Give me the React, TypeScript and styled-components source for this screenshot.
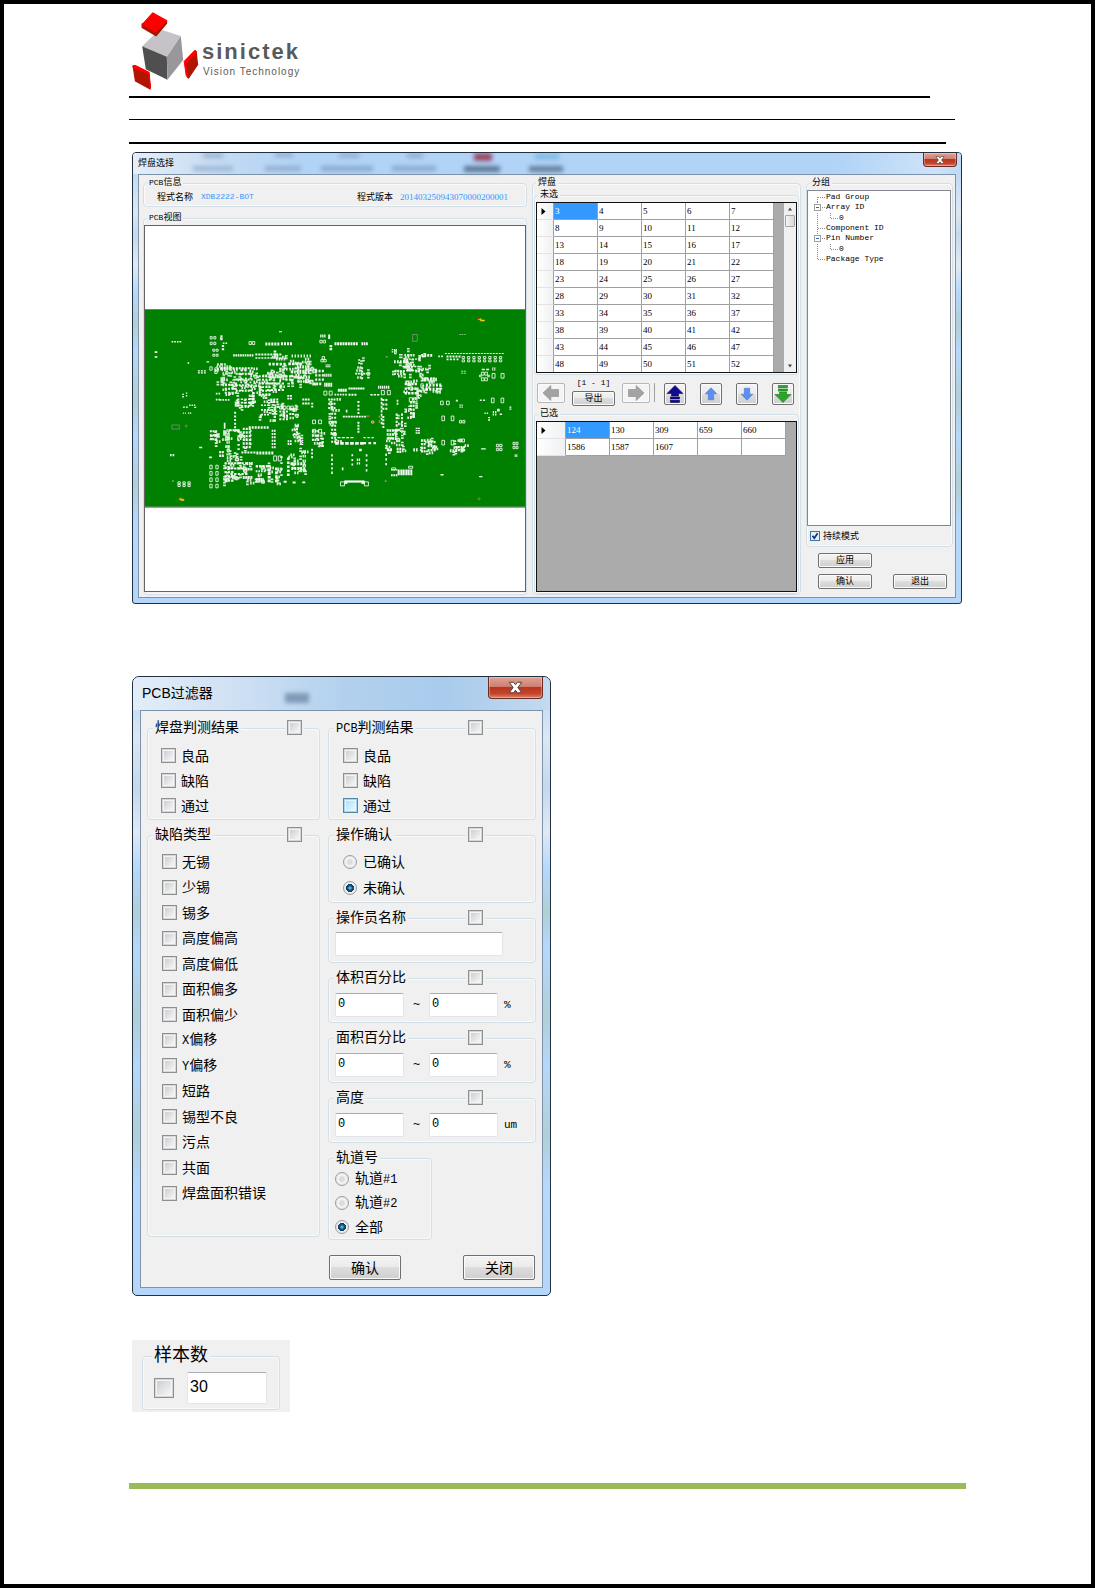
import React from "react";
import styled, { createGlobalStyle, css } from "styled-components";

const cjk = `"Liberation Sans", "Noto Sans CJK SC", sans-serif`;
const mono = `"Liberation Mono", "Noto Sans CJK SC", monospace`;

const GlobalStyle = createGlobalStyle`
  *, *::before, *::after { box-sizing: border-box; }
  body { margin: 0; background: #fff; color: #000; font-family: ${cjk}; }
  button, input { font: inherit; color: inherit; }
`;

/* ---------- page ---------- */

const Page = styled.main`
  border: 4px solid #000;
  padding: 8px 125px 95px;
  background: #fff;
`;

const Brand = styled.header`
  display: flex;
  align-items: flex-start;
  gap: 3px;
  height: 78px;
  padding-left: 3px;
`;

const BrandText = styled.div`
  display: flex;
  flex-direction: column;
  padding-top: 28px;
  color: #5a5a5a;
`;

const BrandName = styled.span`
  font-size: 22px;
  line-height: 24px;
  font-weight: 700;
  letter-spacing: 2px;
`;

const BrandTag = styled.span`
  padding-left: 1px;
  font-size: 10px;
  line-height: 16px;
  letter-spacing: 1px;
`;

const Rule = styled.div<{ $thick?: boolean; $gap: number; $end: number }>`
  height: ${(p) => (p.$thick ? 2 : 1)}px;
  margin: ${(p) => p.$gap}px ${(p) => p.$end}px 0 0;
  background: #000;
`;

const FooterBar = styled.footer`
  height: 6px;
  margin-top: 71px;
  background: #9bbb59;
`;

/* ---------- window chrome ---------- */

const Window = styled.section<{ $small?: boolean }>`
  position: relative;
  border: 1px solid #22303f;
  overflow: hidden;
  background: linear-gradient(
    to bottom, #b3d4f7 0, #dbe8f4 60px, #c3d9ee 18%, #dfeaf5 25%, #b5d8fd 31%,
    #b0cfd6 38%, #b5d8fd 44%, #b0cfd6 55%, #b5d8fd 63%, #b0cfd6 74%, #b5d8fd 82%, #b3d6fa 100%
  );
  ${(p) =>
    p.$small
      ? css`
          width: 419px;
          margin: 72px 0 0 3px;
          padding: 0 7px 7px;
          border-radius: 7px 7px 5px 5px;
          font-size: 14px;
        `
      : css`
          margin: 8px 4px 0 3px;
          padding: 0 5px 5px;
          border-radius: 4px 4px 3px 3px;
          font-size: 9px;
        `}
`;

const TitleBar = styled.div<{ $small?: boolean }>`
  position: relative;
  display: flex;
  justify-content: space-between;
  align-items: flex-start;
  height: ${(p) => (p.$small ? 33 : 21)}px;
  margin: 0 ${(p) => (p.$small ? -7 : -5)}px;
  padding: 0 ${(p) => (p.$small ? 7 : 4)}px 0 ${(p) => (p.$small ? 9 : 5)}px;
  background: ${(p) =>
    p.$small
      ? "linear-gradient(to right, #e2edf8, #cfe0f3 25%, #b3d1ee 50%, #a9cbec 75%, #c3daf0)"
      : "linear-gradient(to right, #e6eff9, #c5dbf2 10%, #b1d3f7 20%, #b1d3f7 85%, #cfe3f8 97%, #bcd9f7)"};
`;

const Ghost = styled.span<{ $x: number; $w: number; $y: number; $h: number; $c: string }>`
  position: absolute;
  left: ${(p) => p.$x}px;
  top: ${(p) => p.$y}px;
  width: ${(p) => p.$w}px;
  height: ${(p) => p.$h}px;
  background: ${(p) => p.$c};
  filter: blur(2px);
`;

const Title = styled.h2<{ $small?: boolean }>`
  position: relative;
  margin: 0;
  font-size: inherit;
  font-weight: 400;
  line-height: ${(p) => (p.$small ? 33 : 20)}px;
`;

const CloseButton = styled.button<{ $small?: boolean }>`
  position: relative;
  display: flex;
  align-items: center;
  justify-content: center;
  width: ${(p) => (p.$small ? 55 : 34)}px;
  height: ${(p) => (p.$small ? 22 : 14)}px;
  padding: 0;
  border: 1px solid #6b2c27;
  border-top: 0;
  border-radius: 0 0 4px 4px;
  box-shadow: inset 0 0 0 1px rgba(255, 255, 255, 0.3);
  background: linear-gradient(#dfa294, #d08071 45%, #ba3420 50%, #c4452c 80%, #d98a6b);
`;

const Client = styled.div<{ $small?: boolean }>`
  display: flex;
  border: 1px solid #7f93a8;
  background: #f0f0f0;
  gap: ${(p) => (p.$small ? 8 : 5)}px;
  padding: ${(p) => (p.$small ? "17px 6px 7px" : "8px 2px 2px 4px")};
`;

const Column = styled.div<{ $w?: number; $gap?: number }>`
  display: flex;
  flex-direction: column;
  gap: ${(p) => p.$gap ?? 0}px;
  min-width: 0;
  ${(p) => (p.$w ? `flex: 0 0 ${p.$w}px;` : "flex: 1;")}
`;

/* ---------- group box ---------- */

const Group = styled.fieldset<{ $pad?: string; $h?: number; $w?: number; $grow?: boolean }>`
  position: relative;
  min-width: 0;
  margin: 0;
  padding: ${(p) => p.$pad ?? "0"};
  border: 1px solid #d3dfe7;
  border-radius: 4px;
  box-shadow: inset 0 0 0 1px #fafafa;
  ${(p) => (p.$h ? `height: ${p.$h}px;` : "")}
  ${(p) => (p.$w ? `width: ${p.$w}px;` : "")}
  ${(p) => (p.$grow ? "flex: 1; display: flex; flex-direction: column;" : "")}
`;

const Legend = styled.legend<{ $x?: number; $lh?: number }>`
  position: absolute;
  left: ${(p) => p.$x ?? 3}px;
  top: ${(p) => -(p.$lh ?? 12) / 2 - 2}px;
  padding: 0 2px;
  background: #f0f0f0;
  line-height: ${(p) => p.$lh ?? 12}px;
  white-space: nowrap;
`;

const Latin = styled.span`
  font-family: ${mono};
  font-size: 12px;
`;

const SmallLatin = styled.span`
  font-family: ${mono};
  font-size: 8px;
`;

/* ---------- controls ---------- */

const Check = styled.input.attrs({ type: "checkbox" })<{ $hot?: boolean; $size?: number }>`
  appearance: none;
  flex: none;
  width: ${(p) => p.$size ?? 15}px;
  height: ${(p) => p.$size ?? 15}px;
  margin: 0;
  padding: 2px;
  border: 1px solid ${(p) => (p.$hot ? "#5586a3" : "#8e8f8f")};
  background:
    linear-gradient(135deg, ${(p) => (p.$hot ? "#b1dffd, #e9f7fe" : "#cbcfd5, #f6f6f6")}) content-box,
    ${(p) => (p.$hot ? "#def9fa" : "#f4f4f4")};
  box-shadow: inset 0 0 0 1px ${(p) => (p.$hot ? "#a5d5ee" : "#d6d6d6")};
`;

const SmallCheck = styled.input.attrs({ type: "checkbox" })`
  appearance: none;
  width: 10px;
  height: 10px;
  margin: 0;
  border: 1px solid #41749a;
  background: #e2f0f9;
`;

const CheckWrap = styled.span`
  position: relative;
  display: flex;
  svg { position: absolute; inset: 0; pointer-events: none; }
`;

const FrameCheck = styled.span<{ $right: number }>`
  position: absolute;
  top: -9px;
  right: ${(p) => p.$right}px;
  display: flex;
  padding: 0 2px;
  background: #f0f0f0;
`;

const Radio = styled.input.attrs({ type: "radio" })`
  appearance: none;
  flex: none;
  width: 14px;
  height: 14px;
  margin: 0;
  border: 1px solid #9a9c9e;
  border-radius: 50%;
  background: radial-gradient(circle, #d9dce0 0 2px, #f4f4f4 4px);
  box-shadow: inset 0 0 0 1px #e6e6e6;
  &:checked {
    background: radial-gradient(circle at 50% 50%, #4fb5dd 0 1px, #17578a 2px, #123a5c 4px, #f4f4f4 4px);
  }
`;

const Options = styled.div<{ $row: number }>`
  display: grid;
  grid-auto-rows: 1fr;
  height: ${(p) => p.$row}px;
`;

const Option = styled.label<{ $gap?: number }>`
  display: flex;
  align-items: center;
  gap: ${(p) => p.$gap ?? 5}px;
  line-height: 18px;
  white-space: nowrap;
`;

const TextBox = styled.input.attrs({ type: "text" })<{ $w: number; $h?: number }>`
  width: ${(p) => p.$w}px;
  height: ${(p) => p.$h ?? 24}px;
  padding: 0 2px 2px;
  border: 1px solid #e2e6ec;
  border-top-color: #abadb3;
  border-radius: 2px;
  background: #fff;
  font-family: ${(p) => (p.$h ? cjk : mono)};
  font-size: ${(p) => (p.$h ? 16 : 12)}px;
`;

const Range = styled.div`
  display: flex;
  align-items: center;
  font-family: ${mono};
  font-size: 12px;
`;

const Tilde = styled.span`
  width: 25px;
  text-align: center;
`;

const Unit = styled.span`
  padding-left: 6px;
  font-size: 11px;
`;

const PushButton = styled.button<{ $w: number; $h?: number }>`
  width: ${(p) => p.$w}px;
  height: ${(p) => p.$h ?? 15}px;
  padding: 0;
  border: 1px solid #707070;
  border-radius: 2px;
  box-shadow: inset 0 0 0 1px #fbfbfb;
  background: linear-gradient(#f3f3f3, #ebebeb 49%, #dddddd 50%, #cfcfcf);
  line-height: 1;
  text-align: center;
`;

const IconButton = styled(PushButton)<{ $off?: boolean }>`
  display: flex;
  align-items: center;
  justify-content: center;
  ${(p) => (p.$off ? "border-color: #b4b8bb; background: #f4f4f4;" : "")}
`;

const Actions = styled.div`
  display: flex;
  justify-content: space-between;
  padding: 0 1px;
`;

/* ---------- pad selection window ---------- */

const InfoRow = styled.div`
  display: grid;
  grid-template-columns: 44px 1fr 43px 120px;
  align-items: center;
  height: 22px;
  padding: 4px 6px 0 13px;
  line-height: 12px;
  white-space: nowrap;
`;

const Value = styled.span<{ $digits?: boolean }>`
  color: #3399ff;
  font-family: ${(p) => (p.$digits ? `"Liberation Serif", serif` : mono)};
  font-size: ${(p) => (p.$digits ? 9 : 8)}px;
`;

const View = styled.div`
  display: flex;
  flex: 1;
  align-items: center;
  border: 1px solid #646464;
  background: #fff;
  svg { display: block; width: 100%; }
`;

const GridFrame = styled.div`
  display: flex;
  height: 171px;
  border: 1px solid #111;
  background: #ababab;
  align-items: flex-start;
  overflow: hidden;
`;

const Table = styled.table<{ $head: number }>`
  width: ${(p) => p.$head + 220}px;
  table-layout: fixed;
  border-collapse: separate;
  border-spacing: 0;
  font-family: "Liberation Serif", serif;
  font-size: 9px;
  line-height: 12px;
  th { width: ${(p) => p.$head}px; }
`;

const RowHead = styled.th`
  height: 17px;
  padding: 0 0 0 4px;
  border-right: 1px solid #a0a0a0;
  border-bottom: 1px solid #e3e3e3;
  background: linear-gradient(to right, #fff, #f0f1f3);
  text-align: left;
  svg { display: block; }
`;

const Cell = styled.td<{ $on?: boolean }>`
  height: 17px;
  padding: 0 0 0 1px;
  border-right: 1px solid #a0a0a0;
  border-bottom: 1px solid #a0a0a0;
  background: ${(p) => (p.$on ? "#3399ff" : "#fff")};
  color: ${(p) => (p.$on ? "#fff" : "#000")};
`;

const Scroll = styled.div`
  display: flex;
  flex-direction: column;
  align-items: center;
  align-self: stretch;
  width: 12px;
  margin-left: auto;
  padding: 4px 0;
  background: #f0f0f0;
`;

const Thumb = styled.div`
  width: 10px;
  height: 12px;
  margin: 4px 0 auto;
  border: 1px solid #a5a5a5;
  border-radius: 1px;
  background: linear-gradient(to right, #f5f5f5, #d8d8d8);
`;

const Toolbar = styled.div`
  display: flex;
  align-items: flex-start;
  height: 39px;
  padding: 8px 4px 0 3px;
`;

const Export = styled.div`
  display: flex;
  flex-direction: column;
  align-items: center;
  gap: 2px;
  margin: -6px 7px 0;
  font-size: 9px;
  line-height: 12px;
`;

const Divider = styled.span`
  width: 1px;
  height: 19px;
  margin-left: 4px;
  background: #a0a0a0;
`;

const Arrows = styled.div`
  display: flex;
  flex: 1;
  justify-content: space-between;
  padding: 0 1px 0 9px;
`;

const Tree = styled.ul`
  display: grid;
  grid-auto-rows: 1fr;
  height: 72px;
  margin: 0;
  padding: 0;
  list-style: none;
`;

const TreeItem = styled.li`
  display: flex;
  align-items: center;
  font-family: ${mono};
  font-size: 8px;
  line-height: 10px;
  white-space: nowrap;
`;

const TreeBox = styled.div`
  height: 336px;
  padding: 1px 0 0 3px;
  border: 1px solid #828790;
  background: #fff;
`;

const Continuous = styled.label`
  display: flex;
  align-items: center;
  gap: 3px;
  height: 20px;
  padding-left: 3px;
  line-height: 12px;
`;

const ButtonGrid = styled.div`
  display: flex;
  justify-content: space-between;
  align-items: flex-end;
  padding: 6px 6px 0 12px;
`;

const Stack = styled.div`
  display: flex;
  flex-direction: column;
  gap: 6px;
`;

/* ---------- sample count ---------- */

const Sample = styled.section`
  width: 158px;
  height: 72px;
  margin: 44px 0 0 3px;
  padding: 16px 10px 2px 10px;
  background: #f0f0f0;
  font-size: 18px;
`;

const SampleRow = styled.div`
  display: flex;
  align-items: center;
  gap: 13px;
`;

/* ---------- drawings ---------- */

const Logo = () => (
  <svg width="67" height="78" viewBox="0 0 200 234" aria-hidden="true">
    <polygon points="30,103 83,52 146,72 104,134" fill="#c5c3c7" />
    <polygon points="30,103 104,134 106,203 41,172" fill="#4f4f4f" />
    <polygon points="104,134 146,72 153,144 106,203" fill="#99979b" />
    <polygon points="30,36 30,46 72,71 103,34 103,26" fill="#a81400" stroke="#a81400" strokeWidth="4" strokeLinejoin="round" />
    <polygon points="62,3 103,26 70,60 31,37" fill="#fe0000" stroke="#fe0000" strokeWidth="4" strokeLinejoin="round" />
    <polygon points="3,162 48,184 54,231 10,207" fill="#b01500" stroke="#b01500" strokeWidth="4" strokeLinejoin="round" />
    <polygon points="2,162 9,160 51,181 55,228 49,186 4,168" fill="#fe0000" stroke="#fe0000" strokeWidth="3" strokeLinejoin="round" />
    <polygon points="162,156 192,122 196,158 169,198" fill="#b01500" stroke="#b01500" strokeWidth="4" strokeLinejoin="round" />
    <polygon points="156,148 188,115 194,119 162,155 167,198 162,190" fill="#fe0000" stroke="#fe0000" strokeWidth="3" strokeLinejoin="round" />
  </svg>
);

const Cross = ({ size }: { size: number }) => (
  <svg width={size} height={size} viewBox="0 0 12 12" aria-hidden="true">
    <path d="M1 1.8H4.4L6 3.8L7.6 1.8H11L7.9 6L11 10.2H7.6L6 8.2L4.4 10.2H1L4.1 6Z" fill="#fff" stroke="#54403f" strokeWidth="0.8" />
  </svg>
);

const Arrow = ({ kind }: { kind: "left" | "right" | "top" | "up" | "down" | "bottom" }) => {
  const big = kind === "top" || kind === "bottom";
  const size = kind === "up" || kind === "down" ? 14 : 18;
  const turn = { left: -90, right: 90, top: 0, up: 0, down: 180, bottom: 180 }[kind];
  const fill = { left: "#a3a3a3", right: "#a3a3a3", top: "#110c8c", up: "#5b8ff0", down: "#5b8ff0", bottom: "#2ca42c" }[kind];
  const edge = { left: "#8b8b8b", right: "#8b8b8b", top: "#0a0660", up: "#3d6cc9", down: "#3d6cc9", bottom: "#1c7c1c" }[kind];
  return (
    <svg width={size} height={size} viewBox="0 0 18 18" aria-hidden="true">
      <g transform={`rotate(${turn} 9 9)`} fill={fill} stroke={edge} strokeWidth="0.6">
        {big ? (
          <>
            <path d="M9 0.5L17 8.5H12.5V11H5.5V8.5H1Z" />
            <rect x="4.5" y="12" width="9" height="2" />
            <rect x="4.5" y="15.3" width="9" height="2.2" />
          </>
        ) : (
          <path d="M9 1L16.5 8.8H12.5V16.5H5.5V8.8H1.5Z" />
        )}
      </g>
    </svg>
  );
};

const Pointer = () => (
  <svg width="5" height="7" viewBox="0 0 5 7" aria-hidden="true">
    <path d="M0.5 0L4.5 3.5L0.5 7Z" fill="#000" />
  </svg>
);

const Chevron = ({ down }: { down?: boolean }) => (
  <svg width="6" height="4" viewBox="0 0 6 4" aria-hidden="true">
    <path d={down ? "M1 0.5H5L3 3.5Z" : "M1 3.5H5L3 0.5Z"} fill="#404040" />
  </svg>
);

type NodeKind = "first" | "mid" | "open" | "child" | "last";

const Branch = ({ kind }: { kind: NodeKind }) => {
  const deep = kind === "child";
  return (
    <svg width={deep ? 28 : 15} height="10" viewBox={`0 0 ${deep ? 28 : 15} 10`} aria-hidden="true">
      <g stroke="#8a8a8a" strokeDasharray="1 1" fill="none">
        <path d={kind === "first" ? "M6.5 5V10" : kind === "last" ? "M6.5 0V5" : "M6.5 0V10"} />
        <path d={deep ? "M19.5 0V5.5H27" : "M7 5.5H14"} />
      </g>
      {kind === "open" && (
        <>
          <rect x="3.5" y="2.5" width="6" height="6" fill="#fff" stroke="#a0a0a0" />
          <path d="M5 5.5H8" stroke="#3c5fa8" />
        </>
      )}
    </svg>
  );
};

/* Board drawing: pads are listed as [x, y, columns, rows, dx, dy, w, h]. */
type PadGrid = [number, number, number, number, number, number, number, number];

const solidPads: PadGrid[] = [
  [123, 159, 4, 1, 8, 0, 5, 5], [72, 190, 1, 2, 0, 15, 8, 5], [405, 164, 5, 1, 9, 0, 6, 9], [452, 163, 4, 1, 9, 0, 6, 9],
  [270, 142, 1, 2, 0, 10, 6, 5], [277, 164, 2, 1, 8, 0, 5, 4], [274, 171, 1, 2, 0, 10, 7, 6], [594, 140, 1, 1, 0, 0, 6, 13],
  [598, 171, 1, 2, 0, 9, 8, 7], [613, 163, 9, 1, 8, 0, 6, 9], [694, 163, 3, 1, 7, 0, 5, 9], [308, 199, 9, 1, 7, 0, 5, 7],
  [375, 197, 9, 1, 9, 0, 6, 6], [375, 208, 9, 1, 9, 0, 6, 5], [484, 200, 7, 1, 9, 0, 4, 9], [415, 225, 5, 1, 11, 0, 7, 8],
  [474, 224, 4, 1, 11, 0, 8, 8], [228, 220, 1, 1, 0, 0, 8, 4], [202, 247, 3, 1, 9, 0, 6, 4], [202, 253, 3, 1, 9, 0, 6, 4],
  [260, 226, 2, 2, 9, 14, 5, 7], [270, 238, 5, 1, 9, 0, 6, 7], [316, 238, 6, 5, 9, 17, 6, 6], [330, 245, 3, 6, 14, 12, 5, 5],
  [500, 232, 5, 1, 8, 0, 5, 10], [500, 246, 5, 1, 8, 0, 5, 12], [502, 263, 5, 1, 8, 0, 5, 10], [502, 277, 5, 1, 8, 0, 5, 8],
  [555, 246, 3, 3, 10, 13, 6, 7], [582, 258, 4, 1, 6, 0, 4, 9], [582, 285, 5, 1, 5, 0, 4, 12], [586, 230, 1, 2, 0, 5, 15, 3],
  [684, 214, 1, 2, 0, 9, 6, 5], [693, 238, 1, 4, 0, 10, 6, 6], [675, 255, 6, 1, 8, 0, 6, 5], [623, 303, 4, 1, 7, 0, 6, 9],
  [655, 299, 7, 1, 7, 0, 6, 6], [613, 318, 5, 1, 8, 0, 5, 5], [655, 318, 3, 1, 9, 0, 6, 6], [721, 319, 3, 1, 10, 0, 7, 4],
  [744, 294, 6, 1, 6, 0, 4, 9], [594, 332, 3, 3, 8, 13, 6, 6], [603, 375, 2, 8, 9, 12, 6, 6], [682, 340, 1, 4, 0, 11, 6, 6],
  [682, 402, 1, 4, 0, 9, 6, 6], [638, 384, 9, 1, 8, 0, 6, 5], [647, 366, 1, 1, 0, 0, 5, 8], [752, 330, 1, 7, 0, 12, 5, 8],
  [757, 334, 2, 3, 9, 13, 6, 6], [757, 385, 1, 4, 0, 10, 6, 6], [615, 463, 6, 1, 15, 0, 11, 8], [700, 463, 3, 1, 15, 0, 8, 7],
  [622, 448, 4, 1, 13, 0, 9, 4], [700, 448, 3, 1, 12, 0, 7, 4], [770, 425, 4, 3, 8, 12, 6, 7], [797, 377, 2, 4, 16, 11, 6, 7],
  [800, 336, 1, 2, 0, 9, 5, 6], [824, 285, 4, 3, 10, 14, 7, 7], [840, 340, 2, 5, 8, 11, 6, 7], [792, 247, 4, 2, 9, 9, 6, 5],
  [792, 217, 5, 1, 9, 0, 5, 9], [817, 234, 6, 1, 9, 0, 6, 4], [828, 246, 6, 1, 9, 0, 6, 4], [828, 212, 5, 1, 9, 0, 6, 4],
  [874, 198, 4, 1, 9, 0, 6, 9], [876, 270, 6, 1, 8, 0, 5, 10], [888, 287, 5, 2, 10, 13, 6, 9], [925, 203, 2, 1, 9, 0, 5, 5],
  [945, 195, 20, 1, 9, 0, 6, 3], [950, 203, 5, 1, 9, 0, 6, 6], [950, 212, 4, 1, 10, 0, 6, 5], [988, 138, 3, 1, 7, 0, 5, 2],
  [994, 249, 2, 2, 8, 6, 6, 2], [1056, 243, 2, 1, 13, 0, 9, 4], [1087, 239, 2, 2, 6, 5, 4, 4], [1050, 335, 2, 1, 10, 0, 6, 5],
  [1102, 363, 1, 1, 0, 0, 8, 8], [1089, 370, 2, 2, 7, 7, 4, 6], [1110, 377, 1, 1, 0, 0, 7, 5], [1139, 356, 1, 2, 0, 6, 6, 4],
  [1064, 374, 2, 1, 7, 0, 4, 5], [1075, 388, 1, 2, 0, 7, 6, 4], [978, 336, 1, 1, 0, 0, 6, 5], [989, 350, 2, 2, 6, 6, 4, 4],
  [857, 420, 2, 3, 7, 7, 6, 4], [873, 455, 2, 4, 8, 11, 6, 7], [893, 460, 3, 3, 9, 12, 6, 7], [850, 482, 2, 1, 8, 0, 5, 10],
  [960, 485, 3, 1, 8, 0, 5, 9], [976, 475, 4, 2, 8, 9, 6, 7], [1054, 482, 1, 1, 0, 0, 14, 4], [932, 559, 1, 1, 0, 0, 9, 5],
  [1048, 565, 1, 1, 0, 0, 10, 4], [803, 546, 9, 1, 5, 0, 4, 17], [783, 545, 3, 1, 7, 0, 5, 4], [783, 560, 3, 1, 7, 0, 5, 6],
  [766, 498, 1, 3, 0, 14, 5, 7], [800, 480, 2, 2, 8, 9, 6, 7], [770, 482, 2, 1, 9, 0, 7, 9], [603, 500, 1, 5, 0, 13, 5, 7],
  [664, 500, 1, 3, 0, 14, 5, 6], [680, 513, 2, 2, 6, 11, 4, 7], [707, 500, 1, 4, 0, 15, 5, 7], [635, 540, 1, 1, 0, 0, 5, 8],
  [687, 483, 1, 1, 0, 0, 8, 8], [517, 488, 2, 5, 6, 14, 4, 8], [483, 524, 5, 2, 9, 14, 6, 9], [470, 510, 1, 5, 0, 12, 8, 7],
  [412, 532, 1, 5, 0, 11, 9, 8], [434, 540, 1, 4, 0, 12, 8, 8], [376, 532, 4, 1, 10, 0, 7, 8], [376, 548, 4, 1, 8, 0, 5, 6],
  [376, 571, 5, 1, 5, 0, 4, 13], [337, 541, 6, 1, 5, 0, 4, 8], [337, 565, 6, 1, 5, 0, 4, 9], [282, 524, 3, 5, 10, 13, 7, 7],
  [300, 524, 5, 3, 11, 16, 7, 6], [348, 523, 3, 1, 7, 0, 5, 9], [333, 492, 6, 1, 9, 0, 6, 6], [378, 492, 6, 1, 9, 0, 6, 9],
  [424, 426, 2, 6, 7, 10, 5, 6], [337, 420, 3, 6, 9, 11, 6, 7], [355, 416, 7, 1, 9, 0, 6, 7], [321, 430, 1, 5, 0, 13, 7, 5],
  [288, 425, 2, 7, 6, 12, 4, 7], [298, 425, 4, 1, 8, 0, 6, 6], [280, 405, 1, 2, 0, 9, 5, 9], [238, 428, 3, 3, 8, 12, 6, 6],
  [253, 455, 1, 3, 0, 9, 8, 5], [266, 490, 2, 2, 8, 11, 6, 7], [206, 477, 1, 1, 0, 0, 9, 5], [236, 507, 1, 1, 0, 0, 8, 5],
  [118, 499, 2, 1, 8, 0, 5, 7], [256, 315, 2, 2, 8, 18, 5, 5], [268, 334, 4, 1, 8, 0, 5, 5], [283, 288, 4, 3, 10, 12, 6, 6],
  [320, 332, 5, 3, 11, 10, 7, 5], [365, 313, 1, 4, 0, 9, 8, 7], [385, 262, 4, 6, 10, 11, 6, 6], [410, 284, 5, 2, 11, 20, 7, 6],
  [392, 350, 3, 3, 9, 14, 6, 5], [420, 332, 3, 2, 9, 8, 6, 6], [447, 368, 3, 3, 10, 12, 6, 6], [477, 362, 2, 2, 8, 14, 6, 6],
  [430, 362, 1, 4, 0, 11, 7, 7], [311, 372, 1, 5, 0, 11, 6, 6], [388, 380, 1, 1, 0, 0, 6, 12], [481, 248, 1, 3, 0, 13, 8, 7],
  [466, 262, 2, 2, 10, 10, 6, 7], [447, 275, 1, 2, 0, 18, 5, 8], [516, 332, 3, 2, 8, 12, 6, 6], [543, 345, 1, 2, 0, 9, 6, 5],
  [471, 322, 2, 2, 8, 8, 6, 5], [549, 284, 3, 1, 9, 0, 6, 8], [545, 427, 3, 3, 8, 13, 6, 7], [509, 456, 2, 3, 6, 6, 4, 4],
  [472, 458, 2, 2, 7, 8, 5, 6], [497, 413, 1, 3, 0, 9, 6, 6], [490, 436, 2, 2, 9, 10, 6, 6], [573, 450, 1, 3, 0, 11, 8, 6],
  [543, 483, 1, 3, 0, 11, 5, 7], [450, 506, 1, 4, 0, 18, 7, 5], [785, 183, 3, 2, 6, 7, 4, 4], [155, 325, 1, 2, 0, -7, 5, 4],
  [166, 314, 1, 2, 0, 8, 4, 4], [157, 356, 2, 1, 9, 0, 6, 4], [176, 350, 3, 1, 7, 0, 4, 5], [191, 357, 1, 1, 0, 0, 6, 4],
  [157, 374, 2, 1, 6, 0, 3, 4], [172, 374, 2, 1, 6, 0, 4, 4], [171, 223, 1, 1, 0, 0, 5, 5], [446, 130, 1, 1, 0, 0, 9, 3],
  [1155, 500, 2, 1, 5, 0, 3, 8], [570, 140, 3, 1, 6, 0, 4, 9], [430, 188, 1, 2, 0, 8, 8, 6], [460, 580, 1, 1, 0, 0, 9, 6],
  [487, 582, 1, 1, 0, 0, 9, 6], [516, 582, 1, 1, 0, 0, 9, 5],
];

const ringPads: PadGrid[] = [
  [239, 146, 2, 2, 11, 17, 6, 7], [247, 184, 2, 2, 10, 15, 6, 6], [270, 148, 1, 1, 0, 0, 5, 6], [356, 161, 2, 1, 10, 0, 7, 9],
  [569, 157, 2, 1, 10, 0, 7, 8], [576, 206, 1, 1, 0, 0, 7, 8], [572, 215, 2, 1, 9, 0, 7, 7], [238, 237, 1, 1, 0, 0, 7, 10],
  [253, 240, 1, 2, 0, 10, 7, 7], [581, 310, 2, 1, 16, 0, 9, 12], [754, 308, 2, 1, 18, 0, 9, 13], [997, 206, 8, 2, 16, 10, 7, 6],
  [1055, 253, 2, 1, 10, 0, 8, 9], [1049, 262, 1, 1, 0, 0, 5, 5], [1055, 270, 2, 1, 10, 0, 8, 9], [1074, 262, 1, 1, 0, 0, 5, 5],
  [1087, 257, 2, 1, 27, 0, 9, 14], [1085, 331, 2, 1, 29, 0, 8, 14], [932, 340, 2, 1, 18, 0, 8, 11], [936, 385, 2, 1, 28, 0, 8, 14],
  [936, 458, 2, 1, 28, 0, 8, 14], [989, 398, 2, 1, 10, 0, 6, 8], [989, 454, 2, 1, 8, 0, 7, 9], [1100, 470, 2, 2, 10, 12, 7, 7],
  [1150, 464, 2, 2, 9, 12, 6, 7], [547, 397, 2, 2, 18, 28, 9, 11], [238, 533, 2, 4, 18, 19, 7, 11], [142, 583, 3, 2, 15, 8, 7, 6],
  [448, 355, 4, 1, 11, 0, 8, 9], [430, 505, 2, 1, 14, 0, 9, 15], [785, 541, 1, 1, 0, 0, 12, 6], [836, 536, 1, 1, 0, 0, 12, 6],
  [838, 330, 2, 1, 14, 0, 9, 12], [873, 288, 1, 1, 0, 0, 7, 12], [725, 400, 1, 1, 0, 0, 6, 6], [360, 427, 1, 4, 0, 13, 2, 6],
  [631, 583, 1, 1, 0, 0, 12, 12], [703, 583, 1, 1, 0, 0, 12, 12],
];

/* Crowded parts of the board, as [x, y, width, height, number of parts]. */
const crowds: [number, number, number, number, number][] = [
  [252, 226, 60, 60, 14], [270, 236, 110, 90, 42], [385, 236, 70, 90, 30], [410, 195, 135, 80, 34], [450, 240, 110, 50, 22],
  [310, 320, 60, 40, 14], [385, 320, 70, 80, 18], [445, 345, 55, 50, 14], [236, 425, 110, 60, 26], [262, 485, 70, 34, 10],
  [278, 520, 84, 66, 28], [370, 525, 80, 62, 20], [465, 480, 60, 75, 14], [478, 405, 36, 60, 12], [545, 430, 34, 40, 8],
  [780, 180, 60, 90, 16], [820, 195, 85, 70, 28], [820, 275, 45, 120, 24], [872, 265, 64, 48, 16], [765, 420, 54, 70, 18],
  [870, 450, 50, 48, 12], [795, 375, 30, 60, 8], [968, 455, 44, 40, 8], [595, 325, 30, 140, 16], [675, 205, 40, 70, 8],
];

const expand = (list: PadGrid[]) =>
  list
    .map(([x, y, nx, ny, dx, dy, w, h]) => {
      let d = "";
      for (let i = 0; i < nx; i++)
        for (let j = 0; j < ny; j++) d += `M${x + i * dx} ${y + j * dy}h${w}v${h}h${-w}z`;
      return d;
    })
    .join("");

const scatter = () => {
  let seed = 20140325;
  const next = (n: number) => {
    seed = (seed * 1103515245 + 12345) % 2147483648;
    return Math.floor((seed / 2147483648) * n);
  };
  let d = "";
  crowds.forEach(([x, y, w, h, count]) => {
    for (let i = 0; i < count; i++) {
      const px = x + next(w / 3) * 3;
      const py = y + next(h / 3) * 3;
      d += next(2) ? `M${px} ${py}h5v8h-5zM${px + 8} ${py}h5v8h-5z` : `M${px} ${py}h8v5h-8zM${px} ${py + 8}h8v5h-8z`;
    }
  });
  return d;
};

const Board = () => (
  <svg viewBox="43 63 1143 597" role="img" aria-label="PCB">
    <rect x="43" y="63" width="1143" height="597" fill="#008000" />
    <path d="M43 64.5H1186M43 658H1186" stroke="#5f8f5f" strokeWidth="3" />
    <path d={scatter()} fill="#d9ecd9" />
    <path d={expand(solidPads)} fill="#f2f9f2" />
    <path d={expand(ringPads)} fill="none" stroke="#f2f9f2" strokeWidth="2.6" />
    <path d="M643 580H703V588H695V584H651V588H643Z" fill="#fff" stroke="#fff" strokeWidth="2" />
    <g fill="none" stroke="#7d8f7d" strokeWidth="2.5">
      <rect x="848" y="140" width="14" height="20" />
      <rect x="124" y="412" width="22" height="12" />
      <circle cx="167" cy="415" r="3" />
      <circle cx="1048" cy="634" r="3" />
      <path d="M767 207H773M124 581H130M764 581H770" strokeWidth="5" />
    </g>
    <path d="M1045 92H1054V96H1064V99H1052V95H1045ZM146 632H152V635H160V639H150V636H146Z" fill="#ffe600" stroke="#e8c000" strokeWidth="2" />
    <path d="M1044 90H1050V94H1044ZM146 630H150V634H146Z" fill="#e02020" />
    <path d="M710 385h8M725 403h8M748 384v6M748 398v8" stroke="#e07030" strokeWidth="4" />
  </svg>
);

/* ---------- data ---------- */

const freePads = Array.from({ length: 10 }, (_, r) => Array.from({ length: 5 }, (_, c) => String(3 + r * 5 + c)));
const chosenPads = [
  ["124", "130", "309", "659", "660"],
  ["1586", "1587", "1607", "", ""],
];

const treeNodes: [NodeKind, string][] = [
  ["first", "Pad Group"],
  ["open", "Array ID"],
  ["child", "0"],
  ["mid", "Component ID"],
  ["open", "Pin Number"],
  ["child", "0"],
  ["last", "Package Type"],
];

const defectTypes: React.ReactNode[] = [
  "无锡", "少锡", "锡多", "高度偏高", "高度偏低", "面积偏多", "面积偏少",
  <><Latin>X</Latin>偏移</>, <><Latin>Y</Latin>偏移</>,
  "短路", "锡型不良", "污点", "共面", "焊盘面积错误",
];

const PadTable = ({ rows, head, label }: { rows: string[][]; head: number; label: string }) => (
  <Table $head={head} aria-label={label}>
    <tbody>
      {rows.map((row, r) => (
        <tr key={r}>
          <RowHead scope="row">{r === 0 && <Pointer />}</RowHead>
          {row.map((v, c) => (
            <Cell key={c} $on={r === 0 && c === 0}>{v}</Cell>
          ))}
        </tr>
      ))}
    </tbody>
  </Table>
);

const blurs: [number, number, number, number, string][] = [
  [70, 0, 20, 5, "#9db7d3"], [60, 13, 40, 5, "#9fb9d6"],
  [142, 0, 18, 4, "#8fadcf"], [132, 13, 36, 5, "#93afd0"],
  [206, 0, 20, 5, "#94b3d2"], [188, 13, 52, 5, "#8aa9cc"],
  [274, 0, 16, 5, "#8fafd2"], [259, 13, 44, 5, "#8aa9cc"],
  [341, 0, 18, 8, "#9a4a68"], [331, 13, 36, 6, "#5e7895"],
  [402, 0, 24, 7, "#86bde4"], [396, 13, 34, 6, "#66809e"],
];

const PadWindow = () => (
  <Window>
    <TitleBar>
      {blurs.map(([x, y, w, h, c], i) => (
        <Ghost key={i} $x={x} $y={y} $w={w} $h={h} $c={c} />
      ))}
      <Title>焊盘选择</Title>
      <CloseButton aria-label="关闭"><Cross size={10} /></CloseButton>
    </TitleBar>
    <Client>
      <Column $gap={11}>
        <Group $h={24}>
          <Legend><SmallLatin>PCB</SmallLatin>信息</Legend>
          <InfoRow>
            <span>程式名称</span>
            <Value>XDB2222-BOT</Value>
            <span>程式版本</span>
            <Value $digits>201403250943070000200001</Value>
          </InfoRow>
        </Group>
        <Group $grow $pad="6px 0 2px">
          <Legend><SmallLatin>PCB</SmallLatin>视图</Legend>
          <View><Board /></View>
        </Group>
      </Column>
      <Column $w={269}>
        <Group $pad="11px 1px 0">
          <Legend>焊盘</Legend>
          <Group $pad="6px 1px 1px">
            <Legend>未选</Legend>
            <GridFrame>
              <PadTable rows={freePads} head={17} label="未选" />
              <Scroll>
                <Chevron />
                <Thumb />
                <Chevron down />
              </Scroll>
            </GridFrame>
          </Group>
          <Toolbar>
            <IconButton $w={28} $h={20} $off aria-label="上一页"><Arrow kind="left" /></IconButton>
            <Export>
              <SmallLatin>[1 - 1]</SmallLatin>
              <PushButton $w={43}>导出</PushButton>
            </Export>
            <IconButton $w={28} $h={20} $off aria-label="下一页"><Arrow kind="right" /></IconButton>
            <Divider />
            <Arrows>
              <IconButton $w={22} $h={22} aria-label="全部上移"><Arrow kind="top" /></IconButton>
              <IconButton $w={22} $h={22} aria-label="上移"><Arrow kind="up" /></IconButton>
              <IconButton $w={22} $h={22} aria-label="下移"><Arrow kind="down" /></IconButton>
              <IconButton $w={22} $h={22} aria-label="全部下移"><Arrow kind="bottom" /></IconButton>
            </Arrows>
          </Toolbar>
          <Group $pad="6px 1px 1px">
            <Legend>已选</Legend>
            <GridFrame>
              <PadTable rows={chosenPads} head={29} label="已选" />
            </GridFrame>
          </Group>
        </Group>
      </Column>
      <Column $w={147}>
        <Group $pad="6px 1px 0 0">
          <Legend>分组</Legend>
          <TreeBox>
            <Tree>
              {treeNodes.map(([kind, text], i) => (
                <TreeItem key={i}>
                  <Branch kind={kind} />
                  {text}
                </TreeItem>
              ))}
            </Tree>
          </TreeBox>
          <Continuous>
            <CheckWrap>
              <SmallCheck defaultChecked />
              <svg width="10" height="10" viewBox="0 0 10 10" aria-hidden="true">
                <path d="M2.5 4.8L4.3 7.3L7.6 2.3" fill="none" stroke="#14307c" strokeWidth="1.7" />
              </svg>
            </CheckWrap>
            持续模式
          </Continuous>
        </Group>
        <ButtonGrid>
          <Stack>
            <PushButton $w={54}>应用</PushButton>
            <PushButton $w={54}>确认</PushButton>
          </Stack>
          <PushButton $w={54}>退出</PushButton>
        </ButtonGrid>
      </Column>
    </Client>
  </Window>
);

const FilterGroup = ({ title, h, pad, right = 50, children }: {
  title: React.ReactNode; h: number; pad: string; right?: number; children: React.ReactNode;
}) => (
  <Group $h={h} $pad={pad}>
    <Legend $x={5} $lh={18}>{title}</Legend>
    <FrameCheck $right={right}><Check aria-label="启用" /></FrameCheck>
    {children}
  </Group>
);

const RangeFields = ({ name, unit }: { name: string; unit: string }) => (
  <Range>
    <TextBox $w={69} defaultValue="0" aria-label={`${name} 下限`} />
    <Tilde>~</Tilde>
    <TextBox $w={69} defaultValue="0" aria-label={`${name} 上限`} />
    <Unit>{unit}</Unit>
  </Range>
);

const results = ["良品", "缺陷", "通过"];

const FilterWindow = () => (
  <Window $small>
    <TitleBar $small>
      <Ghost $x={152} $y={16} $w={24} $h={10} $c="#7f9ab8" />
      <Title $small>PCB过滤器</Title>
      <CloseButton $small aria-label="关闭"><Cross size={15} /></CloseButton>
    </TitleBar>
    <Client $small>
      <Column $w={173} $gap={15}>
        <FilterGroup title="焊盘判测结果" h={92} pad="14px 0 0 13px" right={15}>
          <Options $row={75}>
            {results.map((t) => (
              <Option key={t}><Check />{t}</Option>
            ))}
          </Options>
        </FilterGroup>
        <FilterGroup title="缺陷类型" h={402} pad="13px 0 0 14px" right={15}>
          <Options $row={357}>
            {defectTypes.map((t, i) => (
              <Option key={i}><Check /><span>{t}</span></Option>
            ))}
          </Options>
        </FilterGroup>
      </Column>
      <Column $gap={15}>
        <FilterGroup title={<><Latin>PCB</Latin>判测结果</>} h={92} pad="14px 0 0 14px">
          <Options $row={75}>
            {results.map((t) => (
              <Option key={t}><Check $hot={t === "通过"} />{t}</Option>
            ))}
          </Options>
        </FilterGroup>
        <FilterGroup title="操作确认" h={68} pad="13px 0 0 14px">
          <Options $row={52}>
            <Option $gap={6}><Radio name="confirm" />已确认</Option>
            <Option $gap={6}><Radio name="confirm" defaultChecked />未确认</Option>
          </Options>
        </FilterGroup>
        <FilterGroup title="操作员名称" h={45} pad="13px 0 0 6px">
          <Range><TextBox $w={168} aria-label="操作员名称" /></Range>
        </FilterGroup>
        <FilterGroup title="体积百分比" h={45} pad="14px 0 0 6px">
          <RangeFields name="体积百分比" unit="%" />
        </FilterGroup>
        <FilterGroup title="面积百分比" h={45} pad="14px 0 0 6px">
          <RangeFields name="面积百分比" unit="%" />
        </FilterGroup>
        <FilterGroup title="高度" h={45} pad="14px 0 0 6px">
          <RangeFields name="高度" unit="um" />
        </FilterGroup>
        <Group $h={82} $w={104} $pad="8px 0 0 6px">
          <Legend $x={5} $lh={18}>轨道号</Legend>
          <Options $row={72}>
            <Option $gap={6}><Radio name="track" /><span>轨道<Latin>#1</Latin></span></Option>
            <Option $gap={6}><Radio name="track" /><span>轨道<Latin>#2</Latin></span></Option>
            <Option $gap={6}><Radio name="track" defaultChecked />全部</Option>
          </Options>
        </Group>
        <Actions>
          <PushButton $w={72} $h={25}>确认</PushButton>
          <PushButton $w={72} $h={25}>关闭</PushButton>
        </Actions>
      </Column>
    </Client>
  </Window>
);

export default function App() {
  return (
    <>
      <GlobalStyle />
      <Page>
        <Brand>
          <Logo />
          <BrandText>
            <BrandName>sinictek</BrandName>
            <BrandTag>Vision Technology</BrandTag>
          </BrandText>
        </Brand>
        <Rule $thick $gap={6} $end={36} />
        <Rule $gap={21} $end={11} />
        <Rule $thick $gap={22} $end={20} />
        <PadWindow />
        <FilterWindow />
        <Sample>
          <Group $h={54} $pad="15px 0 0 11px">
            <Legend $x={9} $lh={22}>样本数</Legend>
            <SampleRow>
              <Check $size={20} aria-label="启用样本数" />
              <TextBox $w={80} $h={32} defaultValue="30" aria-label="样本数" />
            </SampleRow>
          </Group>
        </Sample>
        <FooterBar />
      </Page>
    </>
  );
}
